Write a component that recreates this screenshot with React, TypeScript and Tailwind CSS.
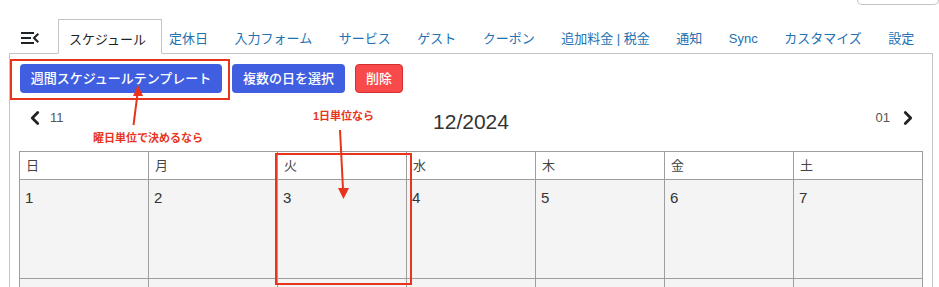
import React from "react";
import { MdMenuOpen } from "react-icons/md";
import { ChevronLeft, ChevronRight } from "lucide-react";

const tabs = [
  "定休日",
  "入力フォーム",
  "サービス",
  "ゲスト",
  "クーポン",
  "追加料金 | 税金",
  "通知",
  "Sync",
  "カスタマイズ",
  "設定",
];

const days = ["日", "月", "火", "水", "木", "金", "土"];

const App: React.FC = () => {
  return (
    <div className="relative h-[287px] w-[939px] overflow-hidden bg-white font-['Liberation_Sans','Noto_Sans_CJK_JP',sans-serif] text-[#333]">
      {/* screen options box, cut off at the top */}
      <div className="flex justify-end">
        <div className="h-[5px] w-[82px] rounded-b-[5px] border border-t-0 border-[#c3c4c7]" />
      </div>

      <div className="ml-[9px] w-[924px]">
        {/* tabs */}
        <div className="mt-[14px] flex h-[35px] items-stretch border-b border-[#c3c4c7]">
          <div className="ml-[9px] mr-[16px] flex items-center pt-[4px] text-[#1d2327]">
            <MdMenuOpen size={24} />
          </div>
          <div className="-mb-px flex w-[104px] items-center border border-[#c3c4c7] border-b-white bg-white pl-[10px] pt-[6px] text-[13px] text-[#1d2327]">
            スケジュール
          </div>
          <div className="ml-[7px] flex items-center gap-[26.5px] pt-[6px] text-[13px] text-[#2271b1]">
            {tabs.map((t) => (
              <span key={t} className="whitespace-nowrap">
                {t}
              </span>
            ))}
          </div>
        </div>

        {/* panel */}
        <div className="h-[240px] border-x border-[#c3c4c7] px-[10px] pt-[10px]">
          <div className="flex h-[29px] gap-[10px] text-[13px] font-medium text-white">
            <button className="w-[202px] rounded-[4px] bg-[#3f5fe0]">
              週間スケジュールテンプレート
            </button>
            <button className="w-[113px] rounded-[4px] bg-[#3f5fe0]">
              複数の日を選択
            </button>
            <button className="w-[48px] rounded-[4px] border border-[#d32f2f] bg-[#f84a4a]">
              削除
            </button>
          </div>

          {/* month navigation */}
          <div className="mt-[5px] grid h-[40px] grid-cols-3 items-center">
            <div className="ml-[4px] flex items-center gap-[4px]">
              <ChevronLeft size={22} strokeWidth={3} className="text-[#222]" />
              <span className="text-[13px] text-[#555]">11</span>
            </div>
            <div className="mt-[8px] text-center text-[21px] text-[#333]">12/2024</div>
            <div className="mr-[3px] flex items-center justify-end gap-[7px]">
              <span className="text-[13px] text-[#555]">01</span>
              <ChevronRight size={22} strokeWidth={3} className="text-[#222]" />
            </div>
          </div>

          {/* calendar */}
          <div className="-ml-px mt-[13px] grid w-[904px] grid-cols-[repeat(7,129px)] border-r border-[#9e9e9e]">
            {days.map((d) => (
              <div
                key={d}
                className="flex h-[28px] items-center border-l border-t border-[#9e9e9e] bg-white pl-[6px] text-[13px] text-[#444]"
              >
                {d}
              </div>
            ))}
            {[1, 2, 3, 4, 5, 6, 7].map((n) => (
              <div
                key={n}
                className="h-[99px] border-l border-t border-[#9e9e9e] bg-[#f4f4f4] pl-[5px] pt-[7px] text-[15px] text-[#333]"
              >
                {n}
              </div>
            ))}
            {[8, 9, 10, 11, 12, 13, 14].map((n) => (
              <div
                key={n}
                className="h-[99px] border-l border-t border-[#9e9e9e] bg-[#f4f4f4]"
              />
            ))}
          </div>
        </div>
      </div>

      {/* annotations */}
      <div className="absolute left-[10px] top-[59px] h-[41px] w-[220px] border-2 border-[#e8341c]" />
      <div className="absolute left-[275px] top-[153px] h-[132px] w-[137px] border-2 border-[#e8341c]" />
      <div className="absolute left-[93px] top-[130px] text-[11px] font-bold text-[#e8341c]">
        曜日単位で決めるなら
      </div>
      <div className="absolute left-[313px] top-[108px] text-[11px] font-bold text-[#e8341c]">
        1日単位なら
      </div>
      <svg className="absolute left-0 top-0" width="939" height="287">
        <line x1="133.5" y1="125" x2="137.5" y2="94" stroke="#e8341c" strokeWidth="2" />
        <polygon points="138,85 133,96 143,96" fill="#e8341c" />
        <line x1="340" y1="130" x2="343" y2="189" stroke="#e8341c" strokeWidth="2" />
        <polygon points="343.5,199 338,188 349,188" fill="#e8341c" />
      </svg>
    </div>
  );
};

export default App;
